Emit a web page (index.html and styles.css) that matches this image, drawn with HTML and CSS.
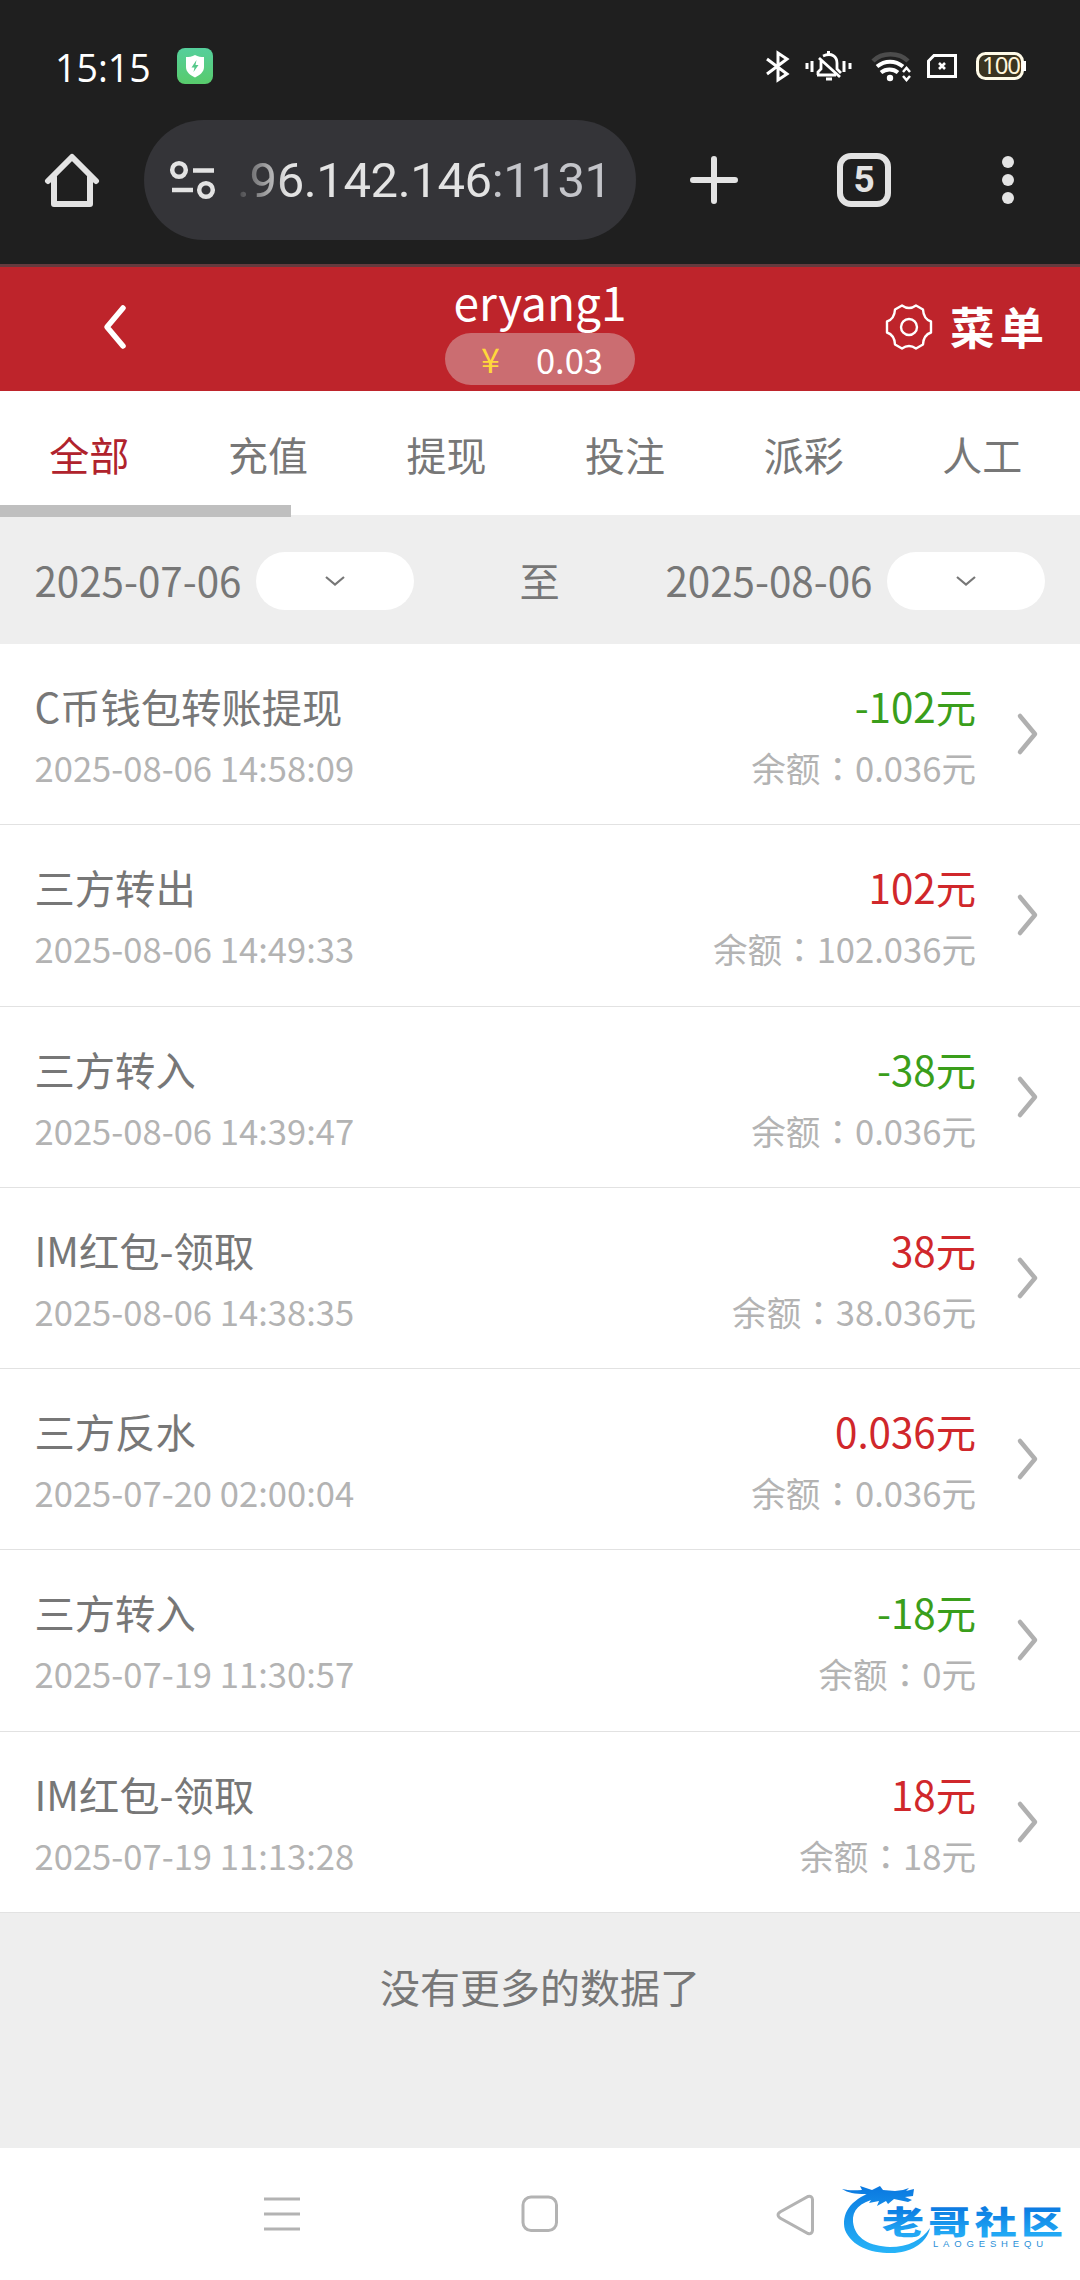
FILE: index.html
```html
<!DOCTYPE html>
<html lang="zh-CN">
<head>
<meta charset="utf-8">
<title>eryang1</title>
<link rel="stylesheet" href="styles.css">
</head>
<body>
<div class="screen">
  <div class="status">
    <span class="clock">15:15</span>
    <svg class="guard" width="36" height="36" viewBox="0 0 36 36">
      <defs><linearGradient id="g1" x1="0" y1="0" x2="0" y2="1"><stop offset="0" stop-color="#55cf9c"/><stop offset="1" stop-color="#58cb6c"/></linearGradient></defs>
      <rect width="36" height="36" rx="8" fill="url(#g1)"/>
      <path d="M18 7c3 1.700 6 2 9 2v10c0 5-4 8-9 10.500C13 27 9 24 9 19V9c3 0 6-.3 9-2z" fill="#fff"/>
      <path d="M19.500 12l-5 7.500h3L16.500 24l5-7h-3z" fill="#55c98a"/>
    </svg>
    <svg class="sys" width="264" height="36" viewBox="764 48 264 36" fill="none" stroke="#fff" stroke-width="3">
      <path d="M767 59l20 15-9 6V53l9 6-20 15"/>
      <path d="M807 63v6M812 61v11M844 61v11M850 63v6" stroke-width="3"/>
      <path d="M817 75h19M818 75v-3l3-3v-9M823 56c9-4 14 1 14 7v6l4 4M819 58l21 19" stroke-width="2.800"/>
      <path d="M828.500 51v4M826 79h6" stroke-width="3"/>
      <path d="M873 61c9-9 26-9 35 0" stroke="#4c4c4c" stroke-width="4.500"/>
      <path d="M877 66.500c8-6.500 18-6.500 26 0M881 72.500c5-4 12-4 17 0" stroke-width="4"/>
      <circle cx="890" cy="78" r="3.200" fill="#fff" stroke="none"/>
      <path d="M903 72l3.500-4 3.500 4M903 76l3.500 4 3.500-4" stroke-width="2.500"/>
      <path d="M934 55.500h21.500v21H928.500V61z" stroke-width="3"/>
      <path d="M939 63l6 6M945 63l-6 6" stroke-width="2.600"/>
      <rect x="977.500" y="53.500" width="45" height="25" rx="8" fill="#3b3420" stroke="#fffbe8" stroke-width="3"/>
      <path d="M1024 61v10" stroke-width="4"/>
      <text class="charge" x="1001" y="73.500" text-anchor="middle" stroke="none" fill="#fff6dc">100</text>
    </svg>
  </div>

  <div class="browser">
    <svg class="home" width="56" height="56" viewBox="0 0 56 56" fill="none" stroke="#e3e3e3" stroke-width="6" stroke-linejoin="round" stroke-linecap="round"><path d="M4 29L28 5l24 24M10 25v27h36V25" /></svg>
    <div class="address">
      <svg width="48" height="40" viewBox="0 0 48 40" fill="none" stroke="#e3e3e3" stroke-width="4.500"><circle cx="10" cy="10" r="6.800"/><circle cx="37" cy="30" r="6.800"/><path d="M24 10.500h21M3 30h21"/></svg>
      <span class="url">.96.142.146<span class="port">:1131</span></span>
    </div>
    <svg class="plus" width="48" height="48" viewBox="0 0 48 48" stroke="#e3e3e3" stroke-width="6" stroke-linecap="round"><path d="M24 3v42M3 24h42"/></svg>
    <span class="count">5</span>
    <svg class="dots" width="12" height="48" viewBox="0 0 12 48" fill="#e3e3e3"><circle cx="6" cy="6" r="6"/><circle cx="6" cy="24" r="6"/><circle cx="6" cy="42" r="6"/></svg>
  </div>

  <header class="header">
    <svg class="back" width="24" height="46" viewBox="0 0 24 46" fill="none" stroke="#fff" stroke-width="5.500" stroke-linecap="round" stroke-linejoin="round"><path d="M20 4L4 23l16 19"/></svg>
    <div class="account">
      <span class="name">eryang1</span>
      <span class="balance"><span class="yen">¥</span><span>0.03</span></span>
    </div>
    <div class="menu">
      <svg width="48" height="48" viewBox="-24 -24 48 48" fill="none" stroke="#fff" stroke-width="2.400" stroke-linejoin="round"><circle r="8"/><path d="M-7 -21.500Q0 -16.500 7 -21.500L14 -17.500Q14.500 -8 22 -5.500V5.500Q14.500 8 14 17.500L7 21.500Q0 16.500 -7 21.500L-14 17.500Q-14.500 8 -22 5.500V-5.500Q-14.500 -8 -14 -17.500z"/></svg>
      <span>菜单</span>
    </div>
  </header>

  <nav class="tabs">
    <a class="tab active">全部</a><a class="tab">充值</a><a class="tab">提现</a><a class="tab">投注</a><a class="tab">派彩</a><a class="tab">人工</a>
    <span class="thumb"></span>
  </nav>

  <div class="range">
    <span class="date">2025-07-06</span>
    <span class="pick"><svg width="22" height="12" viewBox="0 0 22 12"><path d="M2 2l9 7.500L20 2"/></svg></span>
    <span class="to">至</span>
    <span class="date">2025-08-06</span>
    <span class="pick"><svg width="22" height="12" viewBox="0 0 22 12"><path d="M2 2l9 7.500L20 2"/></svg></span>
  </div>

  <main class="list">
    <div class="row"><div class="info"><b>C币钱包转账提现</b><i>2025-08-06 14:58:09</i></div><div class="sum"><b class="out">-102元</b><i>余额<s lang="zh-TW">：</s>0.036元</i></div><svg class="go" width="24" height="44" viewBox="0 0 24 44"><path d="M4 4l15 18L4 40"/></svg></div>
    <div class="row"><div class="info"><b>三方转出</b><i>2025-08-06 14:49:33</i></div><div class="sum"><b class="in">102元</b><i>余额<s lang="zh-TW">：</s>102.036元</i></div><svg class="go" width="24" height="44" viewBox="0 0 24 44"><path d="M4 4l15 18L4 40"/></svg></div>
    <div class="row"><div class="info"><b>三方转入</b><i>2025-08-06 14:39:47</i></div><div class="sum"><b class="out">-38元</b><i>余额<s lang="zh-TW">：</s>0.036元</i></div><svg class="go" width="24" height="44" viewBox="0 0 24 44"><path d="M4 4l15 18L4 40"/></svg></div>
    <div class="row"><div class="info"><b>IM红包-领取</b><i>2025-08-06 14:38:35</i></div><div class="sum"><b class="in">38元</b><i>余额<s lang="zh-TW">：</s>38.036元</i></div><svg class="go" width="24" height="44" viewBox="0 0 24 44"><path d="M4 4l15 18L4 40"/></svg></div>
    <div class="row"><div class="info"><b>三方反水</b><i>2025-07-20 02:00:04</i></div><div class="sum"><b class="in">0.036元</b><i>余额<s lang="zh-TW">：</s>0.036元</i></div><svg class="go" width="24" height="44" viewBox="0 0 24 44"><path d="M4 4l15 18L4 40"/></svg></div>
    <div class="row"><div class="info"><b>三方转入</b><i>2025-07-19 11:30:57</i></div><div class="sum"><b class="out">-18元</b><i>余额<s lang="zh-TW">：</s>0元</i></div><svg class="go" width="24" height="44" viewBox="0 0 24 44"><path d="M4 4l15 18L4 40"/></svg></div>
    <div class="row"><div class="info"><b>IM红包-领取</b><i>2025-07-19 11:13:28</i></div><div class="sum"><b class="in">18元</b><i>余额<s lang="zh-TW">：</s>18元</i></div><svg class="go" width="24" height="44" viewBox="0 0 24 44"><path d="M4 4l15 18L4 40"/></svg></div>
  </main>

  <div class="end">没有更多的数据了</div>

  <footer class="keys">
    <svg class="recent" width="38" height="36" viewBox="0 0 38 36"><path d="M1 2h36M1 17h36M1 32h36"/></svg>
    <svg class="square" width="38" height="38" viewBox="0 0 38 38"><rect x="2" y="2" width="33.500" height="33.500" rx="8"/></svg>
    <svg class="prev" width="40" height="42" viewBox="0 0 40 42"><path d="M4 18L32 2.500q4-1 4.500 3v31q-.5 4-4.500 3L4 24q-4-3 0-6z"/></svg>
    <svg class="brand" width="230" height="76" viewBox="840 2182 230 76">
      <defs>
        <linearGradient id="g2" gradientUnits="userSpaceOnUse" x1="0" y1="2186" x2="0" y2="2253"><stop offset="0" stop-color="#0a78e0"/><stop offset="1" stop-color="#27b4f8"/></linearGradient>
        <linearGradient id="g3" x1="0" y1="0" x2="0" y2="1"><stop offset=".2" stop-color="#0a78e0"/><stop offset=".8" stop-color="#22a8f4"/></linearGradient>
      </defs>
      <g fill="url(#g2)">
        <path d="M872 2192C850 2200 841 2214 845 2230C852 2247 872 2254 895 2253C914 2251 927 2242 930 2228C922 2240 908 2247 890 2247C870 2246 855 2239 853 2222C852 2210 860 2202 876 2199Z"/>
        <path d="M842 2189c8 2 14 1 20 1l-2-4 12 4 8-4 3 4 12 1 8-1 6-2-3 3 8-2-1 7-8 1 7 3-4 2-14-3-6 5-2-3-9 5 2-5-10 2 4-6-8-3c-10 0-17-1-23-5z"/>
      </g>
      <text class="logo" transform="translate(882 2233.500) scale(1 .76)" textLength="181" fill="url(#g3)">老哥社区</text>
      <text class="latin" x="933" y="2246.500" textLength="110" fill="#2b8fd8">LAOGESHEQU</text>
    </svg>
  </footer>
</div>
</body>
</html>
```
FILE: styles.css
```css
* { box-sizing: border-box; }
body { margin: 0; background: #eee; font-family: "Noto Sans CJK SC", "Noto Sans", sans-serif; color: #777; }
.screen { width: 1080px; height: 2280px; display: flex; flex-direction: column; overflow: hidden; }
.screen > * { flex-shrink: 0; }
svg { display: block; flex-shrink: 0; }

.status { height: 114px; background: #1f1f1f; display: flex; align-items: center; padding: 18px 52px 0 55px; }
.clock { width: 122px; font: 37.500px/44px "Open Sans", sans-serif; color: #fff; padding-top: 3px; }
.sys { margin-left: auto; }
.charge { font: 24px "Noto Sans", sans-serif; letter-spacing: -1px; }

.browser { height: 153px; background: #1f1f1f; border-bottom: 3px solid #653a3e; display: flex; align-items: flex-start; padding: 6px 66px 0 44px; }
.home { margin-top: 32px; }
.address { width: 492px; height: 120px; margin-left: 44px; border-radius: 60px; background: #343438; display: flex; align-items: center; padding-left: 25px; }
.url { margin: 2px 0 0 20px; font: 49px/56px Roboto, sans-serif; letter-spacing: -.4px; color: #e3e3e3; -webkit-mask-image: linear-gradient(90deg, rgba(0,0,0,.1), #000 50px); mask-image: linear-gradient(90deg, rgba(0,0,0,.1), #000 50px); }
.port { color: #c3c4c9; }
.plus { margin: 36px 0 0 54px; }
.count { width: 54px; height: 54px; margin: 33px 0 0 99px; border: 6px solid #e3e3e3; border-radius: 14px; font: bold 37px/42px Roboto, sans-serif; color: #e3e3e3; text-align: center; }
.dots { margin: 36px 0 0 111px; }

.header { height: 124px; background: #be242b; color: #fff; display: grid; grid-template-columns: 445px 190px 1fr; }
.back { margin: 37px 0 0 103px; }
.account { display: flex; flex-direction: column; align-items: center; }
.name { height: 66px; font-size: 46px; line-height: 69px; white-space: nowrap; }
.balance { width: 190px; height: 52px; border-radius: 26px; background: #cb6d71; display: flex; align-items: center; justify-content: space-between; padding: 0 32px 0 36px; font-size: 34.500px; line-height: 50px; }
.yen { color: #ffd83c; font-size: 34px; }
.menu { display: flex; align-items: center; justify-content: flex-end; gap: 17px; height: 120px; padding-right: 31px; font-size: 44.500px; font-weight: 700; letter-spacing: 5px; }
.menu span { margin-top: -4px; }

.tabs { height: 124px; background: #fff; display: flex; position: relative; }
.tab { width: 178.600px; flex-shrink: 0; text-align: center; font-size: 40px; line-height: 127px; }
.active { color: #b0232d; }
.thumb { position: absolute; left: 0; top: 114px; width: 291px; height: 12px; background: #bfbfbf; }

.range { height: 129px; background: #eee; display: flex; align-items: center; padding: 3px 35px 0 34.500px; font-size: 40.300px; line-height: 58px; }
.date, .to { margin-top: -3px; }
.date { width: 221.500px; white-space: nowrap; }
.pick { width: 158px; height: 58px; border-radius: 29px; background: #fff; display: flex; align-items: center; justify-content: center; }
.pick svg { fill: none; stroke: #777; stroke-width: 2.200; }
.to { flex: 1; text-align: center; }

.list { background: #fff; }
.row { height: 181.300px; border-bottom: 1.500px solid #e2e2e2; display: flex; padding: 31px 40px 0 34.500px; }
.row b, .row i { display: block; font-style: normal; font-weight: 400; white-space: nowrap; }
.row b { font-size: 40.300px; line-height: 61px; }
.row i { font-size: 34.600px; line-height: 62px; color: #b3b3b3; }
.row s { text-decoration: none; font-family: "Noto Sans CJK TC", sans-serif; }
.sum { margin-left: auto; text-align: right; }
.row .out { color: #3a9e1b; }
.row .in { color: #d0272b; }
.go { margin: 37px 0 0 40px; fill: none; stroke: #b0b0b0; stroke-width: 4.500; stroke-linecap: round; stroke-linejoin: round; }

.end { height: 235px; background: #eee; text-align: center; font-size: 40px; line-height: 58px; padding-top: 44px; }

.keys { height: 132px; background: #fff; display: flex; align-items: flex-start; padding-left: 263px; fill: none; stroke: #b3b3b3; stroke-width: 3; }
.recent { margin-top: 49px; }
.square { margin: 47px 0 0 220px; }
.prev { margin: 46px 0 0 217px; }
.brand { margin: 34px 0 0 24px; stroke: none; }
.logo { font: 900 42px "Noto Sans CJK SC", sans-serif; }
.latin { font: 9.500px "Liberation Sans", sans-serif; }
```
